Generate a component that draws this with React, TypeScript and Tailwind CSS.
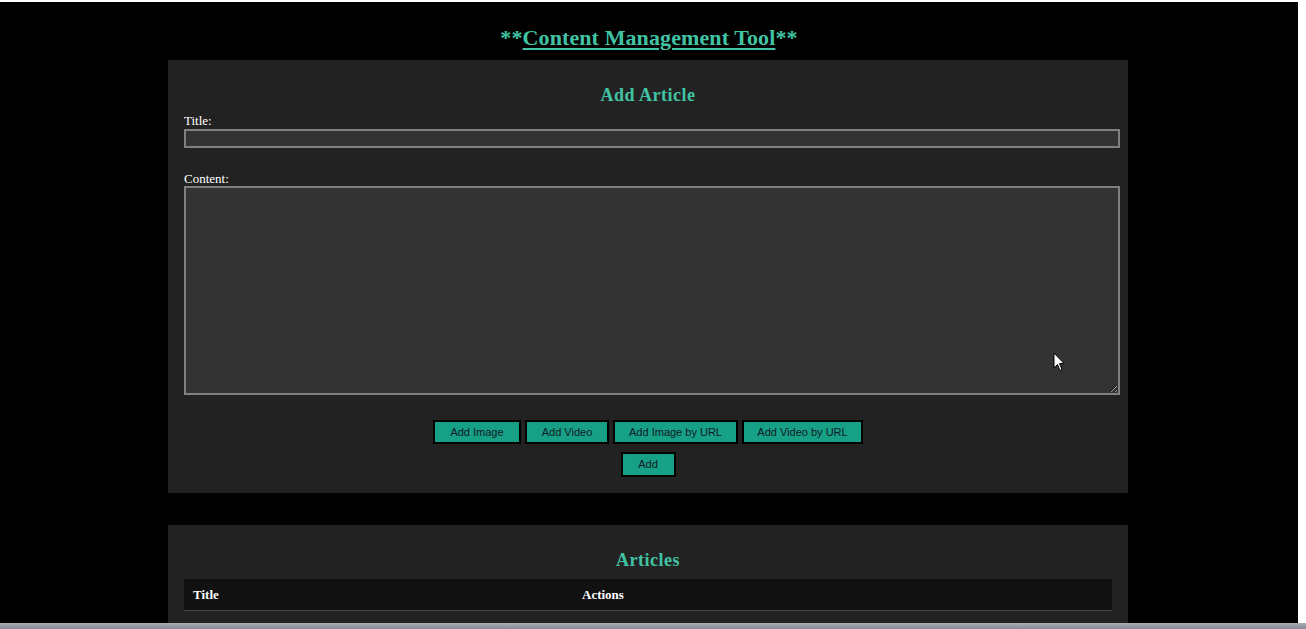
import React from "react";

const serif = { fontFamily: '"Liberation Serif", "Times New Roman", serif' };
const sans = { fontFamily: '"Liberation Sans", Tahoma, Arial, sans-serif' };

function Btn({ label, w, h = "h-[24px]" }: { label: string; w: string; h?: string }) {
  return (
    <button
      className={`${w} ${h} border-2 border-black bg-[#16a085] text-[11px] text-[#111827] leading-none`}
      style={sans}
    >
      {label}
    </button>
  );
}

export default function App() {
  return (
    <div className="w-[1306px] h-[629px] bg-white flex flex-col overflow-hidden">
      <div className="mt-[2px] mr-[8px] h-[621px] bg-black overflow-hidden relative" style={serif}>
        <h1 className="pt-[22px] pb-[2px] text-center text-[22px] leading-[28px] font-bold tracking-[0.1px] text-[#40c4a4]">
          **<span className="underline decoration-2 underline-offset-[3px]">Content Management Tool</span>**
        </h1>
        <div className="ml-[168px] mt-[6px] w-[960px] bg-[#222222] px-[16px] pt-[25px] pb-[16px]">
          <h2 className="text-center text-[18px] leading-[21px] font-bold tracking-[0.5px] text-[#40c4a4]">Add Article</h2>
          <div className="mt-[7px] mb-[1px] text-[13px] leading-[15px] text-white">Title:</div>
          <input
            className="block w-[936px] h-[19px] border-2 border-[#808080] bg-[#333333] outline-none"
            type="text"
          />
          <div className="mt-[23px] text-[13px] leading-[15px] text-white">Content:</div>
          <textarea className="block w-[936px] h-[209px] border-2 border-[#808080] bg-[#333333] outline-none" />
          <div className="mt-[25px] flex justify-center gap-[4px]">
            <Btn label="Add Image" w="w-[88px]" />
            <Btn label="Add Video" w="w-[84px]" />
            <Btn label="Add Image by URL" w="w-[125px]" />
            <Btn label="Add Video by URL" w="w-[121px]" />
          </div>
          <div className="mt-[8px] flex justify-center">
            <Btn label="Add" w="w-[55px]" h="h-[25px]" />
          </div>
        </div>
        <div className="ml-[168px] mt-[32px] w-[960px] bg-[#222222] px-[16px] pt-[25px] pb-[16px]">
          <h2 className="text-center text-[18px] leading-[21px] font-bold tracking-[0.5px] text-[#40c4a4]">Articles</h2>
          <table className="mt-[8px] w-[928px] border-collapse">
            <thead>
              <tr className="bg-[#111111] border-b border-[#444444]">
                <th className="w-[390px] h-[31px] px-[9px] text-left text-[13px] font-bold text-white">Title</th>
                <th className="h-[31px] px-[8px] text-left text-[13px] font-bold text-white">Actions</th>
              </tr>
            </thead>
          </table>
        </div>
        <svg className="absolute left-[1053px] top-[350px]" width="12" height="20" viewBox="0 0 12 20">
          <path d="M1 1 L1 16 L4.5 12.5 L7 18.5 L9 17.5 L6.5 11.5 L11 11.5 Z" fill="white" stroke="black" strokeWidth="1" />
        </svg>
      </div>
      <div className="h-[6px] bg-gradient-to-b from-[#a8acb4] to-[#888c94]" />
    </div>
  );
}
